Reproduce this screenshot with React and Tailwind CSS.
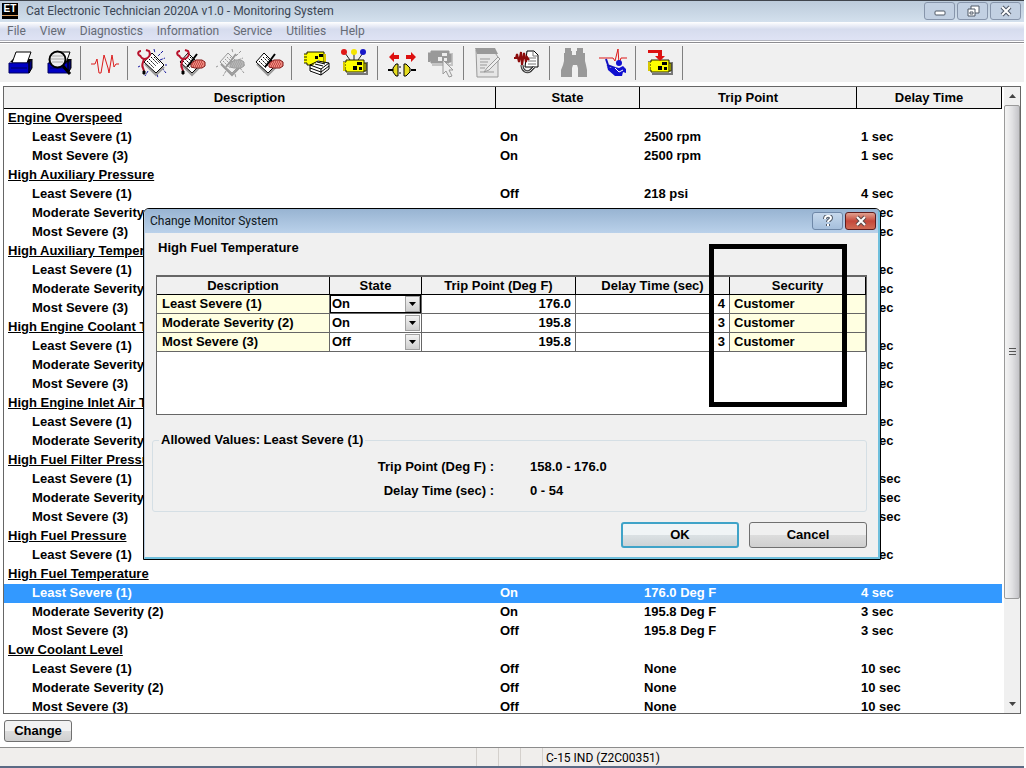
import React, { useState } from 'react';
import clsx from 'clsx';

const menus = ['File', 'View', 'Diagnostics', 'Information', 'Service', 'Utilities', 'Help'];

const LEAST = 'Least Severe (1)';
const MODERATE = 'Moderate Severity (2)';
const MOST = 'Most Severe (3)';

const monitors = [
    { name: 'Engine Overspeed', levels: [
        [LEAST, 'On', '2500 rpm', '1 sec'],
        [MOST, 'On', '2500 rpm', '1 sec'],
    ] },
    { name: 'High Auxiliary Pressure', levels: [
        [LEAST, 'Off', '218 psi', '4 sec'],
        [MODERATE, 'Off', '218 psi', '3 sec'],
        [MOST, '', '', '3 sec'],
    ] },
    { name: 'High Auxiliary Temperature', levels: [
        [LEAST, '', '', '4 sec'],
        [MODERATE, '', '', '3 sec'],
        [MOST, '', '', '3 sec'],
    ] },
    { name: 'High Engine Coolant Temperature', levels: [
        [LEAST, '', '', '4 sec'],
        [MODERATE, '', '', '3 sec'],
        [MOST, '', '', '3 sec'],
    ] },
    { name: 'High Engine Inlet Air Temperature', levels: [
        [LEAST, '', '', '8 sec'],
        [MODERATE, '', '', '8 sec'],
    ] },
    { name: 'High Fuel Filter Pressure', levels: [
        [LEAST, '', '', '10 sec'],
        [MODERATE, '', '', '10 sec'],
        [MOST, '', '', '10 sec'],
    ] },
    { name: 'High Fuel Pressure', levels: [
        [LEAST, '', '', '8 sec'],
    ] },
    { name: 'High Fuel Temperature', levels: [
        [LEAST, 'On', '176.0 Deg F', '4 sec'],
        [MODERATE, 'On', '195.8 Deg F', '3 sec'],
        [MOST, 'Off', '195.8 Deg F', '3 sec'],
    ] },
    { name: 'Low Coolant Level', levels: [
        [LEAST, 'Off', 'None', '10 sec'],
        [MODERATE, 'Off', 'None', '10 sec'],
        [MOST, 'Off', 'None', '10 sec'],
    ] },
];

const dialogRows = [
    { name: LEAST, state: 'On', trip: '176.0', delay: '4' },
    { name: MODERATE, state: 'On', trip: '195.8', delay: '3' },
    { name: MOST, state: 'Off', trip: '195.8', delay: '3' },
];

/* ---- toolbar drawings, all on a 31x30 grid ---- */

const Page = ({ fill = '#fff', stroke = '#000', shift = 0 }) => (
    <g transform={`translate(${shift} 0)`}>
        <path d="M8 16l11 11 8-8" fill="none" stroke="#999" strokeWidth="2" />
        <path d="M15 5L27 17l-8 8L7 14z" fill={fill} stroke={stroke} />
        <path d="M14 9l7 7M12 11l7 7M10 13l7 7M17 9l6 6" stroke={stroke} strokeDasharray="2 1" />
    </g>
);

const Rays = ({ color }) => (
    <path
        d="M17 1l1 4M26 3l-5 5M23 12l5-2M25 20l4 5M20 26l1 4M11 23l-3 5M28 17h2M3 18l-2 1"
        fill="none" stroke={color} strokeDasharray="3 1"
    />
);

const Stethoscope = () => (
    <g fill="none" stroke="#b8122c" strokeWidth="2">
        <path d="M3 8C0 6 1 3 4 3M3 7c1 3 3 4 5 4 4-1 6-4 4-8L9 2" />
        <path d="M7 11c-1 4-3 6-1 9l1 3" />
        <path d="M6 23h2v3H6z" fill="#000" stroke="#000" strokeWidth="1" />
    </g>
);

const Hand = ({ grey }) => (
    <g>
        <path
            d="M15 15l5-3h6l3 2v4l-3 2h-7l-4-1z"
            fill={grey ? '#b5b5b5' : '#ee8a80'} stroke={grey ? '#999' : '#7d1010'}
        />
        <path
            d="M17 14h10M16 16h12M17 18h10" stroke={grey ? '#999' : '#a01818'} strokeDasharray="1 1"
        />
        <path d="M21 6l-6 8-4 5" stroke={grey ? '#999' : '#000'} strokeWidth="2" fill="none" />
    </g>
);

const Ecm = ({ grey }) => (
    <g>
        <path d="M7 26h20V14" stroke={grey ? '#c4c4c4' : '#777'} strokeWidth="2" fill="none" />
        <path
            d="M3 14h3v-2h18v12H6v-2H3M3 17h3M3 20h3M24 15h2v8h-2"
            fill={grey ? '#999' : '#ffff00'} stroke={grey ? '#999' : '#222200'}
        />
        <path d="M4 14v9" stroke={grey ? '#999' : '#d8c800'} strokeWidth="2" />
        <path
            d="M17 14h5v3h-5zM13 18h4v4h-4zM19 19h3v3h-3z"
            fill={grey ? '#eee' : '#000'}
        />
    </g>
);

const Printer = () => (
    <g>
        <path d="M6 14l3-3h19l-3 4z" fill="#000" />
        <path d="M12 4h15l-4 11H8z" fill="#fff" stroke="#000" />
        <path d="M5 15h20v10H5z" fill="#0000c4" stroke="#000060" />
        <path d="M25 15l3-4v9l-3 5z" fill="#000078" stroke="#000" />
        <path d="M7 20h16" stroke="#000060" />
    </g>
);

const icons = {
    print: <Printer />,
    preview: (
        <g>
            <Printer />
            <circle cx="14.5" cy="11.5" r="8" fill="#eee" stroke="#000" strokeWidth="2" />
            <path d="M9 8h11M8 11h13M9 14h11" stroke="#aaa" />
            <path d="M20 18l7 8" stroke="#000" strokeWidth="3" />
        </g>
    ),
    pulse: (
        <path
            d="M1 16h4l2-5 2 14h2l3-18 4 13 1 5 3-18 2 12 2-3h3"
            fill="none" stroke="#dc1c1c"
        />
    ),
    active: <g><Rays color="#1818a0" /><Page /><Stethoscope /></g>,
    logged: <g><Page shift={-3} /><Hand /><Stethoscope /></g>,
    events: <g><Rays color="#999" /><Page fill="#eee" stroke="#999" shift={-2} /><Hand grey /></g>,
    clear: <g><Page shift={-5} /><Hand /></g>,
    summary: (
        <g>
            <path d="M3 6h3V4h17v13H6v-2H3M3 9h3M3 12h3" fill="#ffff00" stroke="#222200" />
            <path d="M23 6h2v8h-2z" fill="#d8c800" />
            <path d="M14 8h3v3h-3zM18 6h4v3h-4z" fill="#000" />
            <path d="M17 12l11 6-10 10-11-5z" fill="#fff" />
            <path d="M9 17l8-4 11 2-8 6zM9 20l11 4 8-6M9 23l11 4 8-6M9 17v6M28 15v6M20 21v6" fill="none" stroke="#000" />
            <path d="M14 16l8 2M16 14l8 2" stroke="#000" />
        </g>
    ),
    config: (
        <g>
            <path d="M5 5l5 7M14 5v7M23 5l-5 7" stroke="#222" />
            <circle cx="4" cy="4" r="3" fill="#e01818" />
            <circle cx="14" cy="4" r="3" fill="#f4e400" />
            <circle cx="23" cy="4" r="3" fill="#1818c8" />
            <Ecm />
        </g>
    ),
    link: (
        <g>
            <path d="M2 9l5-5v3h5v4H7v3zM29 9l-5-5v3h-5v4h5v3z" fill="#dd1010" />
            <path d="M1 22h5M24 22h5" stroke="#000" strokeWidth="2" />
            <path d="M11 16v12H9l-3-4v-4l3-4zM17 16v12h2l4-4v-4l-4-4z" fill="#e6dc20" stroke="#000" />
            <path d="M12 19h2M12 25h2" stroke="#000" />
        </g>
    ),
    ecmSelect: (
        <g>
            <g transform="translate(-1 -9)"><Ecm grey /></g>
            <path d="M17 12v14l3-3 3 6 3-1-3-6h4z" fill="#eee" stroke="#999" />
        </g>
    ),
    clipboard: (
        <g>
            <path d="M3 2h17l5 7v20H4z" fill="#e6e6e6" stroke="#999" />
            <path d="M2 0h20l3 6H4z" fill="#999" />
            <path d="M7 11h10M7 14h8M7 17h7M7 20h5M7 24h14" stroke="#999" />
            <path d="M25 9l-11 11-3 4 5-2L27 11z" fill="#eee" stroke="#999" />
        </g>
    ),
    dataLog: (
        <g>
            <path d="M15 3h7l4 4v12H13z" fill="#fff" stroke="#000" />
            <path d="M21 3v5h5M16 10h8M16 13h8M16 16h8" fill="none" stroke="#777" />
            <path d="M2 10h2l1-4 2 8 2-10 1 13 2-12 2 9 1-5 2 3" fill="none" stroke="#8c0c0c" strokeWidth="2" />
            <path d="M10 17c0 6 5 8 8 6l4-4" fill="none" stroke="#333" strokeWidth="3" />
            <path d="M10 17c0 6 5 8 8 6l4-4" fill="none" stroke="#ddd" />
        </g>
    ),
    find: (
        <path
            d="M6 0h6v3h1v4h4V3h1V0h6v5h2v8l1 4 1 5v7h-9v-9l-1-3h-4l-1 3v9H2v-7l2-5 1-4V5h1z"
            fill="#999"
        />
    ),
    doctor: (
        <g>
            <path d="M1 10h14l2 3 3-12 1 15 2-6h6" fill="none" stroke="#dd1818" />
            <path d="M8 11l3 9M9 17l8 3" stroke="#1010c0" strokeWidth="2" />
            <circle cx="21" cy="15" r="3" fill="#1010d0" />
            <path d="M9 18l3 2 5-1 4 1 4-2 3 3v4l-3-1-1 4h-7l-7-6z" fill="#1010d0" />
            <path d="M17 20l4 4 4-2" stroke="#fff" fill="none" />
        </g>
    ),
    download: (
        <g>
            <Ecm />
            <path d="M3 2h14v6h3l-5 5-5-5h3V5H3z" fill="#dd1010" />
        </g>
    ),
};

const toolGroups = [
    [['print', 'Print'], ['preview', 'Print Preview']],
    [['pulse', 'Status']],
    [['active', 'Active Diagnostics'], ['logged', 'Logged Diagnostics'], ['events', 'Active Events'], ['clear', 'Logged Events']],
    [['summary', 'ECM Summary'], ['config', 'Configuration']],
    [['link', 'Connect'], ['ecmSelect', 'Select ECM']],
    [['clipboard', 'Reports'], ['dataLog', 'Data Log Viewer']],
    [['find', 'Find'], ['doctor', 'Troubleshoot']],
    [['download', 'WinFlash']],
];

const CaptionButton = ({ label, className, children }) => (
    <button
        aria-label={label}
        className={clsx('flex h-[18px] w-[31px] items-center justify-center rounded-[3px] border', className)}
    >
        <svg width="14" height="12" viewBox="0 0 14 12" fill="none">{children}</svg>
    </button>
);

const Cross = ({ stroke }) => (
    <g>
        <path d="M3 2l8 8M11 2l-8 8" stroke={stroke} strokeWidth="4" />
        <path d="M3 2l8 8M11 2l-8 8" stroke="#fff" strokeWidth="2" />
    </g>
);

const TitleBar = () => (
    <header className="flex h-[22px] items-center justify-between border-t border-[#40454d] bg-linear-to-b from-[#bccbdb] to-[#d3e0ed] pr-[3px] pb-0.5 pl-0.5">
        <div className="flex items-center gap-2">
            <div className="flex h-4 w-4 flex-col items-center bg-black font-['Liberation_Sans'] text-[10px] leading-3 font-bold text-white">
                ET
                <span className="h-px w-full bg-[#d89b5a]" />
            </div>
            <h1 className="text-xs text-[#3b4654]">Cat Electronic Technician 2020A v1.0 - Monitoring System</h1>
        </div>
        <div className="flex gap-0.5">
            <CaptionButton label="Minimize" className="border-[#8795ab] bg-[#c2d0e2]">
                <rect x="2" y="6" width="10" height="4" rx="1" fill="#fff" stroke="#4f5866" />
            </CaptionButton>
            <CaptionButton label="Restore" className="border-[#8795ab] bg-[#c2d0e2]">
                <path d="M5 1h8v7H5z" fill="#fff" stroke="#4f5866" />
                <path d="M2 4h7v7H2z" fill="#fff" stroke="#4f5866" />
                <path d="M4 7h3v2H4z" stroke="#4f5866" />
            </CaptionButton>
            <CaptionButton label="Close" className="border-[#8795ab] bg-[#c2d0e2]">
                <Cross stroke="#4f5866" />
            </CaptionButton>
        </div>
    </header>
);

const ScrollBar = () => (
    <div className="ml-0.5 flex w-4 flex-col bg-[#f0f0f0]">
        <button aria-label="Scroll up" className="flex h-[18px] items-center justify-center">
            <svg width="7" height="4" viewBox="0 0 7 4"><path d="M0 4l3.5-4L7 4z" fill="#444" /></svg>
        </button>
        <div className="flex flex-[494] items-center justify-center rounded-xs border border-[#9a9a9a] bg-linear-to-r from-[#f4f4f4] via-[#e2e2e4] to-[#c4c4c8]">
            <svg width="7" height="8" viewBox="0 0 7 8">
                <path d="M0 .5h7M0 3.5h7M0 6.5h7" stroke="#555" />
            </svg>
        </div>
        <div className="flex-[96]" />
        <button aria-label="Scroll down" className="flex h-[18px] items-center justify-center">
            <svg width="7" height="4" viewBox="0 0 7 4"><path d="M0 0h7L3.5 4z" fill="#444" /></svg>
        </button>
    </div>
);

const MonitorTable = () => (
    <table className="w-full table-fixed border-separate border-spacing-0 text-left leading-[17px]">
        <colgroup>
            <col />
            <col className="w-36" />
            <col className="w-[217px]" />
            <col className="w-[145px]" />
        </colgroup>
        <thead>
            <tr className="h-[22px]">
                {['Description', 'State', 'Trip Point', 'Delay Time'].map((h) => (
                    <th key={h} className="border-r border-b border-black bg-[#f0f0f0] p-0 text-center">{h}</th>
                ))}
            </tr>
        </thead>
        <tbody>
            {monitors.map((monitor) => (
                <React.Fragment key={monitor.name}>
                    <tr className="h-[19px] align-top">
                        <th colSpan={4} className="truncate py-0 pl-1 underline">{monitor.name}</th>
                    </tr>
                    {monitor.levels.map(([name, state, trip, delay]) => (
                        <tr
                            key={name}
                            className={clsx(
                                'h-[19px] align-top',
                                monitor.name === 'High Fuel Temperature' && name === LEAST && 'bg-[#3399ff] text-white'
                            )}
                        >
                            <td className="py-0 pl-7">{name}</td>
                            <td className="py-0 pl-1">{state}</td>
                            <td className="py-0 pl-1">{trip}</td>
                            <td className="py-0 pl-1">{delay}</td>
                        </tr>
                    ))}
                </React.Fragment>
            ))}
        </tbody>
    </table>
);

const StateSelect = ({ label, value, onChange, focused }) => (
    <div className={clsx('relative flex h-[18px] border', focused ? 'border-black' : 'border-transparent')}>
        <select
            aria-label={label}
            value={value}
            onChange={onChange}
            className="w-full appearance-none bg-white pl-px text-[13px] leading-4 font-bold outline-none"
        >
            <option>On</option>
            <option>Off</option>
        </select>
        <span className="pointer-events-none absolute inset-y-0 right-0 flex w-[15px] items-center justify-center border border-[#a0a0a0] bg-linear-to-b from-[#f2f2f2] to-[#cfcfcf]">
            <svg width="7" height="4" viewBox="0 0 7 4"><path d="M0 0h7L3.5 4z" fill="#000" /></svg>
        </span>
    </div>
);

const ChangeDialog = () => {
    const [rows, setRows] = useState(dialogRows);

    const setState = (index, state) => {
        setRows(prev => prev.map((row, i) => (i === index ? { ...row, state } : row)));
    };

    return (
        <div
            role="dialog"
            aria-label="Change Monitor System"
            className="relative w-[738px] overflow-hidden rounded-t-md border border-black bg-[#f0f0f0]"
        >
            <div className="border-r-2 border-b-2 border-l border-[#6fbfdc] border-l-[#b5c9dd]">
                <div className="flex h-6 items-center justify-between bg-linear-to-b from-[#98b4d2] to-[#bad1ea] pr-0.5 pl-[5px] font-[Roboto,sans-serif]">
                    <h2 className="text-xs font-normal text-[#101820]">Change Monitor System</h2>
                    <div className="flex gap-0.5">
                        <CaptionButton label="Help" className="border-[#6f88a8] bg-linear-to-b from-[#c6d8ec] to-[#a5bfdc]">
                            <path d="M4 4c0-4 6-4 6-1 0 2-3 2-3 4M7 9v2" stroke="#4f5866" strokeWidth="4" />
                            <path d="M4 4c0-4 6-4 6-1 0 2-3 2-3 4M7 9v2" stroke="#fff" strokeWidth="2" />
                        </CaptionButton>
                        <CaptionButton label="Close dialog" className="border-[#5e1c1c] bg-linear-to-b from-[#e0a090] via-[#c4473a] to-[#cf6a54]">
                            <Cross stroke="#5d4a4a" />
                        </CaptionButton>
                    </div>
                </div>

                <div className="pt-[7px] pr-[11px] pb-[9px] pl-[7px]">
                    <h3 className="pl-1.5 leading-4">High Fuel Temperature</h3>

                    <div className="mt-[19px] ml-1 h-[140px] border border-t-2 border-[#666] bg-white">
                        <table className="w-full table-fixed border-separate border-spacing-0 leading-[17px]">
                            <colgroup>
                                <col />
                                <col className="w-[92px]" />
                                <col className="w-[154px]" />
                                <col className="w-[154px]" />
                                <col className="w-[136px]" />
                            </colgroup>
                            <thead>
                                <tr className="h-[18px]">
                                    {['Description', 'State', 'Trip Point (Deg F)', 'Delay Time (sec)', 'Security'].map((h) => (
                                        <th key={h} className="border-r border-b border-black bg-[#f0f0f0] p-0">{h}</th>
                                    ))}
                                </tr>
                            </thead>
                            <tbody>
                                {rows.map((row, index) => (
                                    <tr key={row.name} className="h-[19px] align-top">
                                        <td className="border-r border-b border-[#666] bg-[#ffffe1] py-0 pl-[5px]">{row.name}</td>
                                        <td className="border-r border-b border-[#666] p-0">
                                            <StateSelect
                                                label={`State of ${row.name}`}
                                                value={row.state}
                                                onChange={(e) => setState(index, e.target.value)}
                                                focused={index === 0}
                                            />
                                        </td>
                                        <td className="border-r border-b border-[#666] py-0 pr-1 text-right">{row.trip}</td>
                                        <td className="border-r border-b border-[#666] py-0 pr-1 text-right">{row.delay}</td>
                                        <td className="border-r border-b border-[#666] bg-[#ffffe1] py-0 pl-1">Customer</td>
                                    </tr>
                                ))}
                            </tbody>
                        </table>
                    </div>

                    <fieldset className="mt-4 rounded-[3px] border border-[#d5dfe5] pt-1.5 pb-2">
                        <legend className="ml-1.5 px-0.5 leading-[18px]">Allowed Values: Least Severe (1)</legend>
                        <dl className="grid grid-cols-[341px_1fr] gap-x-9 leading-6">
                            <dt className="text-right">Trip Point (Deg F) :</dt>
                            <dd>158.0 - 176.0</dd>
                            <dt className="text-right">Delay Time (sec) :</dt>
                            <dd>0 - 54</dd>
                        </dl>
                    </fieldset>

                    <div className="mt-2.5 flex justify-end gap-2.5">
                        <button className="h-[26px] w-[118px] rounded-[3px] border-2 border-[#3fa3c8] bg-linear-to-b from-[#f0f4f6] from-50% via-[#dbe1e4] via-50% to-[#cdd3d6]">
                            OK
                        </button>
                        <button className="h-[26px] w-[118px] rounded-[3px] border border-[#707070] bg-linear-to-b from-[#f0f0f0] from-50% via-[#dddddd] via-50% to-[#cfcfcf]">
                            Cancel
                        </button>
                    </div>
                </div>
            </div>

            {/* marker drawn over the security column */}
            <div className="pointer-events-none absolute top-[35px] left-[565px] h-[163px] w-[138px] border-5 border-black" />
        </div>
    );
};

const App = () => {
    return (
        <div className="relative flex h-screen flex-col overflow-hidden bg-white pr-0.5 font-['Liberation_Sans',Arial,sans-serif] text-[13px] leading-[18px] font-bold text-black">
            <div className="font-[Roboto,sans-serif] font-normal">
                <TitleBar />
                <nav className="flex h-[19px] items-center gap-3.5 border-b border-[#b4b6c0] bg-linear-to-b from-white via-[#d6dcee] via-40% to-[#dfe3f4] pl-[7px] text-xs text-[#666b75]">
                    {menus.map((menu) => (
                        <button key={menu}>{menu}</button>
                    ))}
                </nav>
                <div className="h-[3px] border-y border-t-white border-b-white bg-[#8c8c90]" />
            </div>

            <div className="flex h-[38px] items-center bg-[#f0f0f0]">
                {toolGroups.map((group) => (
                    <div key={group[0][0]} className="flex items-center">
                        {group.map(([id, label]) => (
                            <button key={id} aria-label={label} className="flex w-[39px] justify-center">
                                <svg width="31" height="30" viewBox="0 0 31 30">{icons[id]}</svg>
                            </button>
                        ))}
                        <div className="mr-[5px] ml-0.5 h-[34px] w-px bg-[#808080]" />
                    </div>
                ))}
            </div>

            <main className="mx-[3px] mt-1 flex min-h-0 flex-1 border border-[#666]">
                <div className="min-w-0 flex-1 overflow-hidden">
                    <MonitorTable />
                </div>
                <ScrollBar />
            </main>

            <div className="flex h-[33px] items-center px-1">
                <button className="h-[22px] w-[68px] rounded-[3px] border border-[#707070] bg-linear-to-b from-[#f2f2f2] from-50% via-[#dddddd] via-50% to-[#cfcfcf]">
                    Change
                </button>
            </div>

            <footer className="flex h-[21px] border-t border-b-2 border-t-[#8c8c8c] border-b-[#5b6a85] bg-[#f0eeec] font-[Roboto,sans-serif] text-xs leading-5 font-normal">
                <div className="w-[476px]" />
                <div className="w-[22px] border-l border-[#d4d0cc]" />
                <div className="w-[22px] border-l border-[#d4d0cc]" />
                <div className="w-[22px] border-l border-[#d4d0cc]" />
                <div className="flex-1 border-l border-[#d4d0cc] pl-[3px]">C-15 IND (Z2C00351)</div>
            </footer>

            <div className="absolute inset-0 flex items-center justify-center pr-0.5">
                <ChangeDialog />
            </div>
        </div>
    );
};

export default App;
